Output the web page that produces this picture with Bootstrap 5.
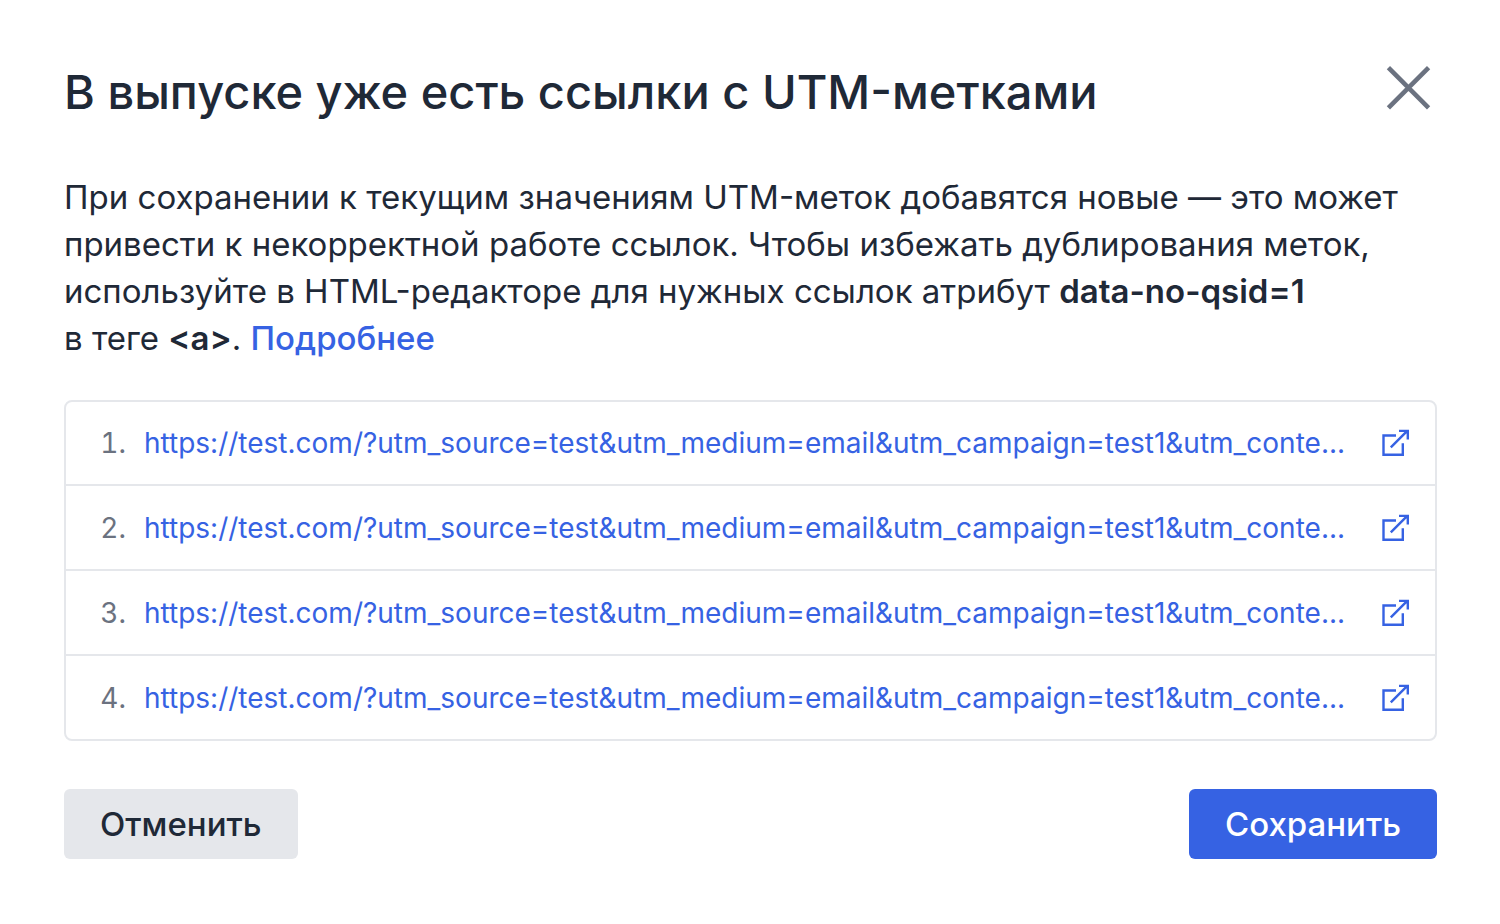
<!DOCTYPE html>
<html lang="ru">
<head>
<meta charset="utf-8">
<meta name="viewport" content="width=device-width, initial-scale=1">
<title>UTM-метки</title>
<link href="https://cdn.jsdelivr.net/npm/bootstrap@5.3.0/dist/css/bootstrap.min.css" rel="stylesheet">
<style>
  body { font-family: Inter, sans-serif; color: #1f2937; background: #fff; }
  .dialog { padding: 64px 63px 64px 64px; }
  .dialog-title { font-size: 47px; line-height: 56px; font-weight: 500; }
  .close-btn { margin-right: 4px; width: 48px; height: 48px; color: #6b7280; }
  .close-btn svg { display: block; }
  .dialog-text { font-size: 33px; line-height: 47px; margin: 54px 0 38px; }
  .dialog-text b { font-weight: 600; }
  .dialog-text a { color: #3662e3; font-weight: 500; }
  .links { border: 2px solid #e5e7eb; border-radius: 8px; }
  .link-row { height: 85px; padding: 0 25px 0 34px; font-size: 28px; line-height: 40px; }
  .link-row:first-child { height: 82px; }
  .link-row + .link-row { border-top: 2px solid #e5e7eb; }
  .link-num { width: 26px; margin-right: 18px; color: #6b7280; text-align: right; font-variant-numeric: tabular-nums; }
  .link-row a { color: #3662e3; }
  .actions { margin-top: 48px; }
  .action-btn { height: 70px; padding: 0 36px; border: 0; border-radius: 6px; font-size: 33px; font-weight: 500; line-height: 48px; }
  .cancel, .cancel:hover { background: #e5e7eb; color: #1f2937; }
  .save, .save:hover { background: #3662e3; color: #fff; }
</style>
</head>
<body>
<svg class="d-none" aria-hidden="true">
  <symbol id="open-icon" viewBox="0 0 28 28">
    <path d="M14 6.5H1.5V25.8H20.8V14.3M8.8 18.3 25.5 1.6M17 1.9H25.8V10.4" fill="none" stroke="currentColor" stroke-width="2.4"/>
  </symbol>
</svg>
<main class="dialog">
  <header class="d-flex justify-content-between align-items-start">
    <h1 class="dialog-title mb-0">В выпуске уже есть ссылки с UTM-метками</h1>
    <button type="button" class="btn close-btn border-0 p-0" aria-label="Закрыть">
      <svg width="48" height="48" viewBox="0 0 48 48" fill="none" stroke="currentColor" stroke-width="4.6"><path d="M3.4 3.6 43.6 43.8M43.6 3.6 3.4 43.8"/></svg>
    </button>
  </header>
  <p class="dialog-text">При сохранении к текущим значениям UTM-меток добавятся новые — это может привести к некорректной работе ссылок. Чтобы избежать дублирования меток, используйте в HTML-редакторе для нужных ссылок атрибут <b>data-no-qsid=1</b><br>в&nbsp;теге <b>&lt;a&gt;</b>. <a href="#" class="text-decoration-none">Подробнее</a></p>
  <ol class="links list-unstyled mb-0">
    <li class="link-row d-flex align-items-center">
      <span class="link-num flex-shrink-0">1.</span>
      <a href="#" class="d-flex flex-grow-1 align-items-center justify-content-between text-nowrap text-decoration-none"><span>https://test.com/?utm_source=test&amp;utm_medium=email&amp;utm_campaign=test1&amp;utm_conte...</span><svg class="flex-shrink-0" width="28" height="28"><use href="#open-icon"/></svg></a>
    </li>
    <li class="link-row d-flex align-items-center">
      <span class="link-num flex-shrink-0">2.</span>
      <a href="#" class="d-flex flex-grow-1 align-items-center justify-content-between text-nowrap text-decoration-none"><span>https://test.com/?utm_source=test&amp;utm_medium=email&amp;utm_campaign=test1&amp;utm_conte...</span><svg class="flex-shrink-0" width="28" height="28"><use href="#open-icon"/></svg></a>
    </li>
    <li class="link-row d-flex align-items-center">
      <span class="link-num flex-shrink-0">3.</span>
      <a href="#" class="d-flex flex-grow-1 align-items-center justify-content-between text-nowrap text-decoration-none"><span>https://test.com/?utm_source=test&amp;utm_medium=email&amp;utm_campaign=test1&amp;utm_conte...</span><svg class="flex-shrink-0" width="28" height="28"><use href="#open-icon"/></svg></a>
    </li>
    <li class="link-row d-flex align-items-center">
      <span class="link-num flex-shrink-0">4.</span>
      <a href="#" class="d-flex flex-grow-1 align-items-center justify-content-between text-nowrap text-decoration-none"><span>https://test.com/?utm_source=test&amp;utm_medium=email&amp;utm_campaign=test1&amp;utm_conte...</span><svg class="flex-shrink-0" width="28" height="28"><use href="#open-icon"/></svg></a>
    </li>
  </ol>
  <div class="actions d-flex justify-content-between">
    <button type="button" class="btn action-btn cancel">Отменить</button>
    <button type="button" class="btn action-btn save">Сохранить</button>
  </div>
</main>
<script src="https://cdn.jsdelivr.net/npm/bootstrap@5.3.0/dist/js/bootstrap.bundle.min.js"></script>
</body>
</html>
